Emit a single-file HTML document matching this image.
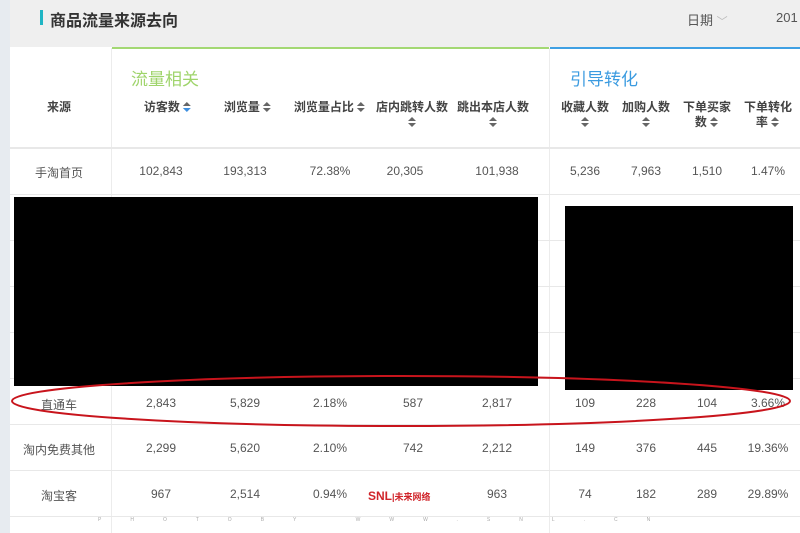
<!DOCTYPE html><html><head><meta charset="utf-8"><style>
body{margin:0;width:800px;height:533px;overflow:hidden;background:#fff;font-family:"Liberation Sans","Noto Sans CJK SC",sans-serif;position:relative}
.a{position:absolute}
.t{position:absolute;transform:translateX(-50%);white-space:nowrap;font-size:12px;color:#555}
.h{position:absolute;transform:translateX(-50%);text-align:center;font-size:12px;color:#444;font-weight:bold;line-height:15px;white-space:nowrap}
.s{display:inline-block;width:9px;height:11px;vertical-align:-2px;position:relative}
.s:before{content:"";position:absolute;left:0;top:0;border:4.5px solid transparent;border-top:0;border-bottom:4.5px solid #666}
.s:after{content:"";position:absolute;left:0;top:6px;border:4.5px solid transparent;border-bottom:0;border-top:4.5px solid #666}
.s.b:after{border-top-color:#3d8fe0}
.hl{position:absolute;left:10px;width:790px;height:1px;background:#e8e8e8}
</style></head><body>
<div class="a" style="left:0;top:0;width:10px;height:533px;background:#e7ebf0"></div>
<div class="a" style="left:10px;top:0;width:790px;height:47px;background:#efefef"></div>
<div class="a" style="left:40px;top:10px;width:3px;height:15px;background:#1fb5c4"></div>
<div class="a" style="left:50px;top:7px;font-size:16px;font-weight:bold;color:#333">商品流量来源去向</div>
<div class="a" style="left:687px;top:10px;font-size:13px;color:#555">日期 <span style="color:#bbb;font-size:11px">﹀</span></div>
<div class="a" style="left:776px;top:10px;font-size:13px;color:#555">201</div>
<div class="a" style="left:112px;top:47px;width:437px;height:2px;background:#a3d873"></div>
<div class="a" style="left:550px;top:47px;width:250px;height:2px;background:#3fa0e3"></div>
<div class="a" style="left:111px;top:48px;width:1px;height:485px;background:#ececec"></div>
<div class="a" style="left:549px;top:48px;width:1px;height:485px;background:#ececec"></div>
<div class="a" style="left:131px;top:65px;font-size:17px;color:#9fd46b">流量相关</div>
<div class="a" style="left:570px;top:65px;font-size:17px;color:#3b9be0">引导转化</div>
<div class="h" style="left:59px;top:100px">来源</div>
<div class="h" style="left:168px;top:100px">访客数 <span class="s b"></span></div>
<div class="h" style="left:248px;top:100px">浏览量 <span class="s"></span></div>
<div class="h" style="left:330px;top:100px">浏览量占比 <span class="s"></span></div>
<div class="h" style="left:412px;top:100px">店内跳转人数<br><span class="s"></span></div>
<div class="h" style="left:493px;top:100px">跳出本店人数<br><span class="s"></span></div>
<div class="h" style="left:585px;top:100px">收藏人数<br><span class="s"></span></div>
<div class="h" style="left:646px;top:100px">加购人数<br><span class="s"></span></div>
<div class="h" style="left:707px;top:100px">下单买家<br>数 <span class="s"></span></div>
<div class="h" style="left:768px;top:100px">下单转化<br>率 <span class="s"></span></div>
<div class="hl" style="top:147px;height:2px"></div>
<div class="hl" style="top:194px"></div><div class="hl" style="top:240px"></div><div class="hl" style="top:286px"></div><div class="hl" style="top:332px"></div><div class="hl" style="top:378px"></div><div class="hl" style="top:424px"></div><div class="hl" style="top:470px"></div><div class="hl" style="top:516px"></div>
<div class="t" style="left:59px;top:164px">手淘首页</div><div class="t" style="left:161px;top:164px">102,843</div><div class="t" style="left:245px;top:164px">193,313</div><div class="t" style="left:330px;top:164px">72.38%</div><div class="t" style="left:405px;top:164px">20,305</div><div class="t" style="left:497px;top:164px">101,938</div><div class="t" style="left:585px;top:164px">5,236</div><div class="t" style="left:646px;top:164px">7,963</div><div class="t" style="left:707px;top:164px">1,510</div><div class="t" style="left:768px;top:164px">1.47%</div>
<div class="t" style="left:59px;top:396px">直通车</div><div class="t" style="left:161px;top:396px">2,843</div><div class="t" style="left:245px;top:396px">5,829</div><div class="t" style="left:330px;top:396px">2.18%</div><div class="t" style="left:413px;top:396px">587</div><div class="t" style="left:497px;top:396px">2,817</div><div class="t" style="left:585px;top:396px">109</div><div class="t" style="left:646px;top:396px">228</div><div class="t" style="left:707px;top:396px">104</div><div class="t" style="left:768px;top:396px">3.66%</div>
<div class="t" style="left:59px;top:441px">淘内免费其他</div><div class="t" style="left:161px;top:441px">2,299</div><div class="t" style="left:245px;top:441px">5,620</div><div class="t" style="left:330px;top:441px">2.10%</div><div class="t" style="left:413px;top:441px">742</div><div class="t" style="left:497px;top:441px">2,212</div><div class="t" style="left:585px;top:441px">149</div><div class="t" style="left:646px;top:441px">376</div><div class="t" style="left:707px;top:441px">445</div><div class="t" style="left:768px;top:441px">19.36%</div>
<div class="t" style="left:59px;top:487px">淘宝客</div><div class="t" style="left:161px;top:487px">967</div><div class="t" style="left:245px;top:487px">2,514</div><div class="t" style="left:330px;top:487px">0.94%</div><div class="t" style="left:413px;top:487px">337</div><div class="t" style="left:497px;top:487px">963</div><div class="t" style="left:585px;top:487px">74</div><div class="t" style="left:646px;top:487px">182</div><div class="t" style="left:707px;top:487px">289</div><div class="t" style="left:768px;top:487px">29.89%</div>
<div class="a" style="left:368px;top:489px;font-size:12px;font-weight:bold;color:#d0242a;background:#fff">SNL<span style="font-size:9px">|未来网络</span></div>
<div class="a" style="left:98px;top:517px;font-size:5px;color:#aaa;letter-spacing:29px">PHOTOBY WWW.SNL.CN</div>
<div class="a" style="left:14px;top:197px;width:524px;height:189px;background:#000"></div>
<div class="a" style="left:565px;top:206px;width:228px;height:184px;background:#000"></div>
<svg class="a" style="left:0;top:0" width="800" height="533"><ellipse cx="401" cy="401" rx="389" ry="25" fill="none" stroke="#c8141c" stroke-width="2"/></svg>
</body></html>
